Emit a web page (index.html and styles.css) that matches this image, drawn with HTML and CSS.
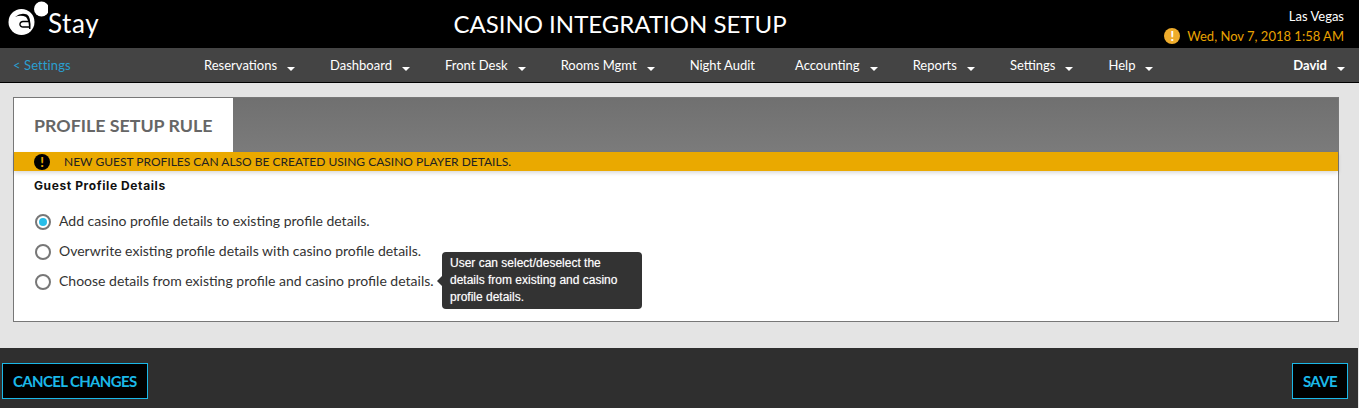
FILE: index.html
```html
<!DOCTYPE html>
<html lang="en">
<head>
    <meta charset="UTF-8">
    <title>Casino Integration Setup</title>
    <link rel="stylesheet" href="styles.css">
</head>
<body>

    <header class="topbar">
        <div class="logo">
            <svg class="logo-mark" width="47" height="38" viewBox="0 0 47 38">
                <circle cx="40.5" cy="9" r="7.5" fill="#fff"/>
                <circle cx="20.5" cy="22" r="13" fill="#fff"/>
                <path d="M14 17 Q20 12 26 14.5 Q30 17 29.5 29 L28 29 Q28 20 25 17 Q20 14.5 14 17 Z" fill="#000"/>
                <path d="M28 21.5 H22.5 A3 2.8 0 1 0 22.5 27 H28" fill="none" stroke="#000" stroke-width="1.4"/>
            </svg>
            <span class="logo-text">Stay</span>
        </div>
        <h1 class="page-title">CASINO INTEGRATION SETUP</h1>
        <div class="hotel-info">
            <div class="hotel-name">Las Vegas</div>
            <div class="hotel-date"><span class="date-icon">!</span>Wed, Nov 7, 2018 1:58 AM</div>
        </div>
    </header>

    <nav class="navbar">
        <a class="back-link">&lt;&nbsp;Settings</a>
        <ul class="menu">
            <li class="caret">Reservations</li>
            <li class="caret">Dashboard</li>
            <li class="caret">Front Desk</li>
            <li class="caret">Rooms Mgmt</li>
            <li class="plain">Night Audit</li>
            <li class="caret">Accounting</li>
            <li class="caret">Reports</li>
            <li class="caret">Settings</li>
            <li class="caret">Help</li>
        </ul>
        <div class="user caret">David</div>
    </nav>

    <main class="content">
        <section class="panel">
            <div class="panel-head">
                <h2 class="tab">PROFILE SETUP RULE</h2>
            </div>
            <div class="notice"><span class="notice-icon">!</span>NEW GUEST PROFILES CAN ALSO BE CREATED USING CASINO PLAYER DETAILS.</div>
            <div class="panel-body">
                <h3 class="group-title">Guest Profile Details</h3>
                <div class="option"><span class="radio checked"></span>Add casino profile details to existing profile details.</div>
                <div class="option"><span class="radio"></span>Overwrite existing profile details with casino profile details.</div>
                <div class="option">
                    <span class="radio"></span>Choose details from existing profile and casino profile details.
                    <div class="tooltip">User can select/deselect the details from existing and casino profile details.</div>
                </div>
            </div>
        </section>
    </main>

    <footer class="footer">
        <button class="btn">CANCEL CHANGES</button>
        <button class="btn">SAVE</button>
    </footer>

</body>
</html>
```

FILE: styles.css
```css
body {
    margin: 0;
    padding: 0;
    font-family: 'Lato', sans-serif;
    background: #e4e4e4;
    height: 408px;
    overflow: hidden;
}

.topbar {
    background: #000;
    height: 48px;
    display: flex;
    align-items: center;
    justify-content: space-between;
    position: relative;
    color: #fff;
}

.logo {
    display: flex;
    align-items: center;
    padding-left: 1px;
}

.logo-mark {
    margin-bottom: 10px;
}

.logo-text {
    font-size: 26px;
    letter-spacing: 0.6px;
    margin-bottom: 3px;
}

.page-title {
    position: absolute;
    left: 0;
    right: 0;
    top: 9px;
    margin: 0;
    padding-right: 119px;
    text-align: center;
    font-size: 24px;
    line-height: 29px;
    font-weight: 400;
}

.hotel-info {
    text-align: right;
    padding: 5px 15px 0 0;
    font-size: 13px;
}

.hotel-name {
    line-height: 16px;
}

.hotel-date {
    display: flex;
    align-items: center;
    margin-top: 3px;
    color: #e8a200;
    font-size: 13px;
    line-height: 18px;
}

.date-icon {
    width: 16px;
    height: 16px;
    border-radius: 50%;
    background: #eeac2c;
    color: #fff;
    font-size: 13px;
    font-weight: 900;
    line-height: 16px;
    text-align: center;
    margin-right: 7px;
}

.navbar {
    background: #444;
    height: 34px;
    border-bottom: 1px solid #000;
    display: flex;
    align-items: center;
    font-size: 13px;
    color: #fff;
    position: relative;
}

.back-link {
    color: #2a9fd0;
    padding-left: 13px;
    width: 191px;
    letter-spacing: 0.1px;
}

.menu {
    list-style: none;
    margin: 0;
    padding: 0;
    display: flex;
    gap: 35px;
}

.menu .plain {
    margin-right: 5px;
}

.caret::after {
    content: "";
    display: inline-block;
    border-left: 4px solid transparent;
    border-right: 4px solid transparent;
    border-top: 4px solid #fff;
    margin-left: 10px;
    vertical-align: -1px;
}

.user {
    margin-left: auto;
    padding-right: 14px;
    font-weight: 700;
}

.content {
    height: 265px;
    padding: 14px 20px 0 13px;
    box-sizing: border-box;
}

.panel {
    background: #fff;
    border: 1px solid #777;
    height: 225px;
    box-sizing: border-box;
}

.panel-head {
    height: 54px;
    background: linear-gradient(#707070, #7b7b7b);
}

.tab {
    background: #fff;
    width: 219px;
    height: 54px;
    margin: 0;
    box-sizing: border-box;
    padding-left: 20px;
    font-size: 17.8px;
    line-height: 54px;
    color: #666;
    font-weight: 700;
}

.notice {
    background: #eaa900;
    height: 19px;
    display: flex;
    align-items: center;
    padding-left: 20px;
    font-size: 12px;
    color: #222;
    box-shadow: 0 2px 4px rgba(0, 0, 0, 0.15);
}

.notice-icon {
    width: 16px;
    height: 16px;
    border-radius: 50%;
    background: #000;
    color: #eaa900;
    font-size: 13px;
    font-weight: 900;
    line-height: 16px;
    text-align: center;
    margin-right: 14px;
}

.panel-body {
    padding: 8px 20px 0;
}

.group-title {
    margin: 0 0 12px;
    font-family: 'Inter', sans-serif;
    font-size: 12px;
    line-height: 14px;
    font-weight: 700;
    letter-spacing: 0.6px;
    color: #111;
}

.option {
    display: flex;
    align-items: center;
    height: 30px;
    font-size: 14px;
    color: #333;
    position: relative;
}

.radio {
    width: 16px;
    height: 16px;
    box-sizing: border-box;
    border: 2px solid #777;
    border-radius: 50%;
    background: #fff;
    margin: 4px 8px 0 1px;
    flex: none;
    position: relative;
}

.radio.checked::after {
    content: "";
    position: absolute;
    left: 2px;
    top: 2px;
    width: 8px;
    height: 8px;
    border-radius: 50%;
    background: #27bde8;
}

.tooltip {
    position: absolute;
    left: 408px;
    top: -13px;
    width: 200px;
    height: 57px;
    box-sizing: border-box;
    padding: 3px 8px;
    background: #333;
    border-radius: 4px;
    color: #fff;
    font-family: 'Liberation Sans', sans-serif;
    font-size: 12px;
    line-height: 17px;
    text-shadow: 0 0 1px rgba(255, 255, 255, 0.5);
}

.tooltip::before {
    content: "";
    position: absolute;
    left: -5px;
    top: 24px;
    border-top: 5px solid transparent;
    border-bottom: 5px solid transparent;
    border-right: 5px solid #333;
}

.footer {
    height: 60px;
    background: #2f2f2f;
    display: flex;
    justify-content: space-between;
    align-items: flex-start;
    padding: 15px 10px 0 2px;
    margin-right: 1px;
    box-sizing: border-box;
}

.btn {
    height: 36px;
    padding: 0 10px;
    background: #000;
    border: 1px solid #1bb8e8;
    color: #1bb8e8;
    font-family: 'Lato', sans-serif;
    font-size: 15px;
    font-weight: 700;
    letter-spacing: -0.65px;
}
```
